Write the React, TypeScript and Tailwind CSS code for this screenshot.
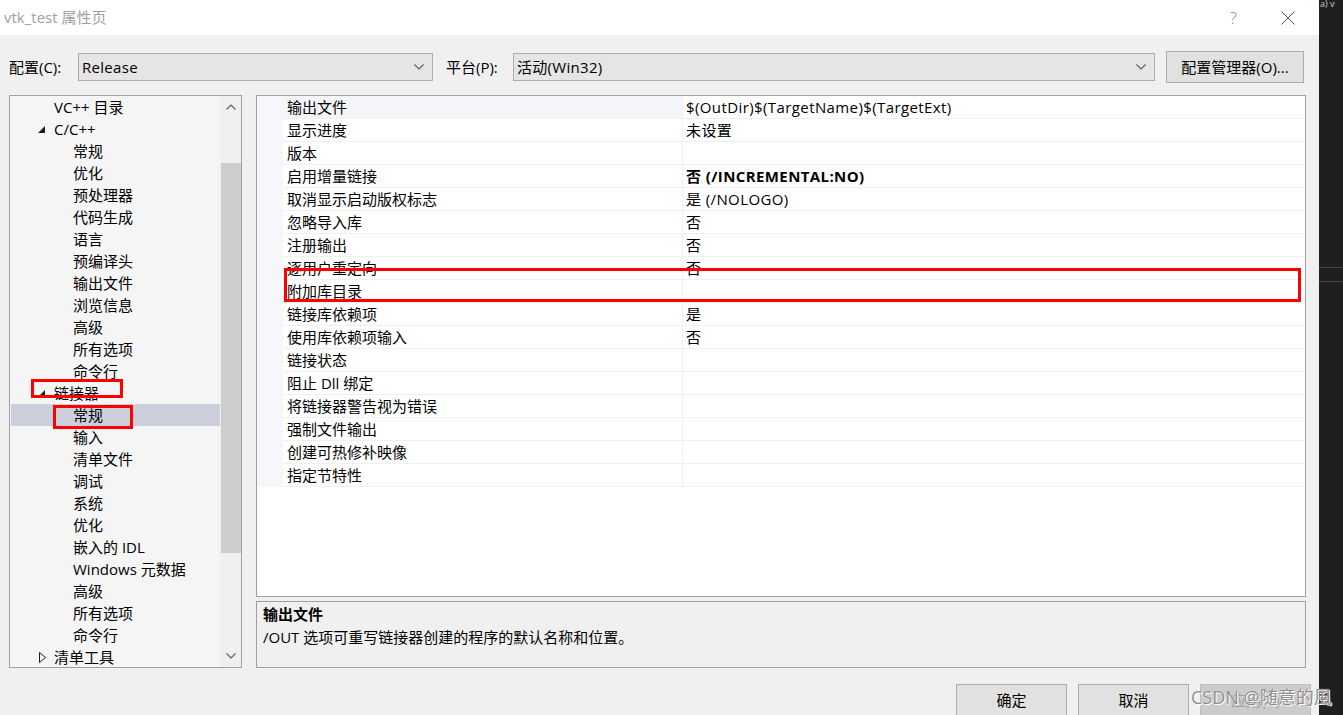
import React from "react";

const FONT = '"Open Sans", "Noto Sans CJK SC", sans-serif';

type TreeItem = { t: string; l: 1 | 2; exp?: "open" | "closed"; sel?: boolean };

const tree: TreeItem[] = [
  { t: "VC++ 目录", l: 1 },
  { t: "C/C++", l: 1, exp: "open" },
  { t: "常规", l: 2 },
  { t: "优化", l: 2 },
  { t: "预处理器", l: 2 },
  { t: "代码生成", l: 2 },
  { t: "语言", l: 2 },
  { t: "预编译头", l: 2 },
  { t: "输出文件", l: 2 },
  { t: "浏览信息", l: 2 },
  { t: "高级", l: 2 },
  { t: "所有选项", l: 2 },
  { t: "命令行", l: 2 },
  { t: "链接器", l: 1, exp: "open" },
  { t: "常规", l: 2, sel: true },
  { t: "输入", l: 2 },
  { t: "清单文件", l: 2 },
  { t: "调试", l: 2 },
  { t: "系统", l: 2 },
  { t: "优化", l: 2 },
  { t: "嵌入的 IDL", l: 2 },
  { t: "Windows 元数据", l: 2 },
  { t: "高级", l: 2 },
  { t: "所有选项", l: 2 },
  { t: "命令行", l: 2 },
  { t: "清单工具", l: 1, exp: "closed" },
];

const props: { name: string; value?: string; bold?: boolean }[] = [
  { name: "输出文件", value: "$(OutDir)$(TargetName)$(TargetExt)" },
  { name: "显示进度", value: "未设置" },
  { name: "版本" },
  { name: "启用增量链接", value: "否 (/INCREMENTAL:NO)", bold: true },
  { name: "取消显示启动版权标志", value: "是 (/NOLOGO)" },
  { name: "忽略导入库", value: "否" },
  { name: "注册输出", value: "否" },
  { name: "逐用户重定向", value: "否" },
  { name: "附加库目录" },
  { name: "链接库依赖项", value: "是" },
  { name: "使用库依赖项输入", value: "否" },
  { name: "链接状态" },
  { name: "阻止 Dll 绑定" },
  { name: "将链接器警告视为错误" },
  { name: "强制文件输出" },
  { name: "创建可热修补映像" },
  { name: "指定节特性" },
];

function Chevron({ up = false }: { up?: boolean }) {
  return (
    <svg width="10" height="6" viewBox="0 0 10 6" className="shrink-0">
      <path
        d={up ? "M0.5 5.5 L5 1 L9.5 5.5" : "M0.5 0.5 L5 5 L9.5 0.5"}
        fill="none"
        stroke="#606060"
        strokeWidth="1.2"
      />
    </svg>
  );
}

function Combo({ text, width }: { text: string; width: string }) {
  return (
    <div className={`${width} h-[28px] bg-[#e5e5e5] border border-[#adadad] flex items-center pl-[3px] pr-[8px]`}>
      <span className="flex-1 text-[15px] text-black leading-none tracking-[0.3px]">{text}</span>
      <Chevron />
    </div>
  );
}

function Button({ text, disabled = false, width = "w-[111px]" }: { text: string; disabled?: boolean; width?: string }) {
  return (
    <div
      className={`${width} h-[32px] border flex items-center justify-center text-[15px] ${
        disabled ? "bg-[#cccccc] border-[#bfbfbf] text-[#a0a0a0]" : "bg-[#e1e1e1] border-[#adadad] text-black"
      }`}
    >
      {text}
    </div>
  );
}

export default function App() {
  return (
    <div className="w-[1343px] h-[715px] flex relative overflow-hidden bg-[#f0f0f0]" style={{ fontFamily: FONT }}>
      <div className="w-[1319px] h-full flex flex-col">
        {/* title bar */}
        <div className="h-[35px] bg-white flex items-center pl-[4px] shrink-0">
          <span className="text-[15px] text-[#a0a0a0] flex-1">vtk_test 属性页</span>
          <span className="text-[17px] text-[#8a8a8a] font-light mr-[44px]">?</span>
          <svg width="14" height="14" viewBox="0 0 14 14" className="mr-[24px]">
            <path d="M0.5 0.5 L13.5 13.5 M13.5 0.5 L0.5 13.5" stroke="#555" strokeWidth="1" />
          </svg>
        </div>

        {/* body */}
        <div className="flex-1 flex flex-col">
          {/* config row */}
          <div className="h-[32px] mt-[16px] flex items-center">
            <span className="w-[78px] pl-[9px] text-[15px] text-black">配置(C):</span>
            <Combo text="Release" width="w-[355px]" />
            <span className="ml-[13px] w-[67px] text-[15px] text-black">平台(P):</span>
            <Combo text="活动(Win32)" width="w-[642px]" />
            <div className="ml-[11px] w-[138px] h-[32px] bg-[#e1e1e1] border border-[#adadad] flex items-center justify-center text-[15px] text-black whitespace-nowrap">
              配置管理器(O)...
            </div>
          </div>

          {/* panels */}
          <div className="mt-[12px] flex">
            {/* tree */}
            <div className="ml-[9px] w-[233px] h-[573px] border border-[#a0a0a0] bg-[#f5f5f5] flex">
              <div className="w-[210px] flex flex-col">
                {tree.map((it, i) => (
                  <div
                    key={i}
                    className={`h-[22px] shrink-0 flex items-center relative text-[15px] text-black whitespace-nowrap ${
                      it.sel ? "bg-[#cccedb] ml-[1px]" : ""
                    } ${it.l === 1 ? "pl-[44px]" : it.sel ? "pl-[62px]" : "pl-[63px]"}`}
                  >
                    {it.exp === "open" && (
                      <svg width="7" height="7" viewBox="0 0 7 7" className="absolute left-[28px] top-[8px]">
                        <polygon points="7,0 7,7 0,7" fill="#1e1e1e" />
                      </svg>
                    )}
                    {it.exp === "closed" && (
                      <svg width="7" height="11" viewBox="0 0 7 11" className="absolute left-[29px] top-[6px]">
                        <polygon points="0.5,0.5 6.5,5.5 0.5,10.5" fill="none" stroke="#1e1e1e" strokeWidth="1" />
                      </svg>
                    )}
                    {it.t}
                  </div>
                ))}
              </div>
              {/* scrollbar */}
              <div className="w-[21px] h-full bg-[#f0f0f0] flex flex-col items-center">
                <div className="h-[22px] flex items-center">
                  <Chevron up />
                </div>
                <div className="w-[20px] h-[390px] mt-[45px] bg-[#cdcdcd]" />
                <div className="flex-1" />
                <div className="h-[22px] flex items-center">
                  <Chevron />
                </div>
              </div>
            </div>

            <div className="ml-[14px] w-[1050px] flex flex-col">
              {/* property grid */}
              <div className="h-[502px] border border-[#a0a0a0] bg-white flex flex-col">
                {props.map((p, i) => (
                  <div key={i} className="h-[23px] flex shrink-0">
                    <div className="w-[26px] bg-[#f5f7fb]" />
                    <div
                      className={`w-[400px] border-b border-r border-[#eef0f4] pl-[4px] flex items-center text-[15px] text-black ${
                        i === 0 ? "bg-[#f3f5f9]" : ""
                      }`}
                    >
                      {p.name}
                    </div>
                    <div
                      className={`flex-1 border-b border-[#eef0f4] pl-[3px] flex items-center text-[15px] text-black tracking-[0.4px] ${
                        p.bold ? "font-bold" : ""
                      }`}
                    >
                      {p.value}
                    </div>
                  </div>
                ))}
              </div>
              {/* description */}
              <div className="mt-[4px] h-[67px] border border-[#a0a0a0] bg-[#f0f0f0] pl-[6px] pt-[1px] flex flex-col">
                <div className="h-[23px] flex items-center text-[15px] font-bold text-black">输出文件</div>
                <div className="h-[23px] flex items-center text-[15px] text-black">
                  /OUT 选项可重写链接器创建的程序的默认名称和位置。
                </div>
              </div>
            </div>
          </div>

          {/* buttons */}
          <div className="mt-[16px] flex pl-[956px] gap-[11px]">
            <Button text="确定" />
            <Button text="取消" />
            <Button text="应用(A)" disabled />
          </div>
        </div>
      </div>

      {/* dark strip at right */}
      <div className="w-[24px] h-full bg-[#1f1f1f] flex flex-col">
        <div className="h-[10px] text-[9px] leading-[8px] text-[#cccccc] overflow-hidden pl-[1px] whitespace-nowrap">a) v</div>
        <div className="h-[257px]" />
        <div className="h-[1px] bg-[#444444]" />
        <div className="h-[13px]" />
        <div className="h-[1px] bg-[#444444]" />
      </div>

      {/* red annotation boxes */}
      <div className="absolute left-[31px] top-[379px] w-[92px] h-[19px] border-[3px] border-[#ff0000]" />
      <div className="absolute left-[53px] top-[405px] w-[80px] h-[24px] border-[3px] border-[#ff0000]" />
      <div className="absolute left-[284px] top-[268px] w-[1017px] h-[34px] border-[3px] border-[#ff0000]" />

      {/* watermark */}
      <div
        className="absolute left-[1191px] top-[684px] text-[18px] text-[#8c8c8c] whitespace-nowrap"
        style={{ textShadow: "0 0 1px #fff, 1px 1px 0 #fff" }}
      >
        CSDN @随意的風
      </div>
    </div>
  );
}
